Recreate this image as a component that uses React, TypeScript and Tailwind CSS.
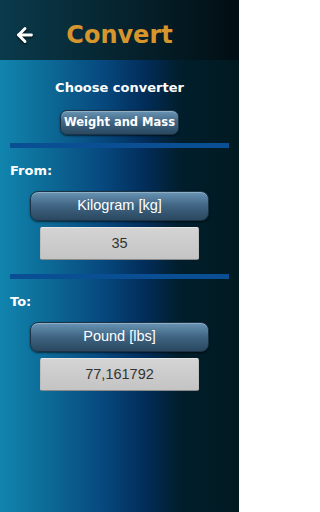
import { ArrowLeft } from 'lucide-react'

const body = { fontFamily: '"DejaVu Sans", Verdana, sans-serif' }
const plain = { fontFamily: '"Liberation Sans", Arial, sans-serif' }

function UnitButton({ label }: { label: string }) {
  return (
    <div
      className="mx-[30px] mt-[12px] h-[30px] rounded-[8px] border border-[#1c3346] bg-gradient-to-b from-[#6a95b5] via-[#3f6482] to-[#2a4860] shadow-[0_1px_2px_rgba(0,0,0,0.6),inset_0_1px_0_rgba(255,255,255,0.25)] flex items-center justify-center text-white text-[14.5px]"
      style={plain}
    >
      {label}
    </div>
  )
}

function ValueBox({ value }: { value: string }) {
  return (
    <div
      className="mx-[40px] mt-[6px] h-[33px] rounded-[2px] border border-t-[#e6e6e6] border-x-[#bdbdbd] border-b-[#8a8a8a] bg-gradient-to-b from-[#d4d4d4] to-[#c4c4c4] flex items-center justify-center text-[#333] text-[14.5px]"
      style={plain}
    >
      {value}
    </div>
  )
}

function Divider() {
  return <div className="mx-[10px] h-[5px] bg-[#0a4f94]" />
}

export default function App() {
  return (
    <div
      className="w-[239px] h-[512px] overflow-hidden bg-[linear-gradient(to_right,#1185ae_0%,#0c6794_22%,#074a80_42%,#022e5c_60%,#011e2c_75%,#001a20_100%)]"
      style={body}
    >
      {/* Header */}
      <div className="h-[60px] pt-[10px] flex items-center bg-[linear-gradient(to_right,#0a3a4b,#06242f_50%,#010e13)]">
        <div className="w-[36px] pl-[14px] flex items-center">
          <ArrowLeft className="w-[24px] h-[24px] text-white drop-shadow-[0_1px_1px_rgba(0,0,0,0.8)]" strokeWidth={3.2} />
        </div>
        <div className="flex-1 text-center text-[24px] leading-[28px] font-bold text-[#d6962d]">Convert</div>
        <div className="w-[36px]" />
      </div>

      <div className="pt-[20px] text-center text-[13px] leading-[16px] font-bold text-white">
        Choose converter
      </div>
      <div className="mt-[14px] flex justify-center">
        <div className="w-[119px] h-[25px] rounded-[7px] border border-[#1c3346] bg-gradient-to-b from-[#6a95b5] via-[#3f6482] to-[#2a4860] shadow-[0_1px_2px_rgba(0,0,0,0.6),inset_0_1px_0_rgba(255,255,255,0.25)] flex items-center justify-center text-white text-[11.5px] font-bold">
          Weight and Mass
        </div>
      </div>

      <div className="mt-[8px]">
        <Divider />
      </div>

      <div className="mt-[15px] pl-[10px] text-[13px] leading-[16px] font-bold text-white">From:</div>
      <UnitButton label="Kilogram [kg]" />
      <ValueBox value="35" />

      <div className="mt-[14px]">
        <Divider />
      </div>

      <div className="mt-[15px] pl-[10px] text-[13px] leading-[16px] font-bold text-white">To:</div>
      <div className="mt-[1px]" />
      <UnitButton label="Pound [lbs]" />
      <ValueBox value="77,161792" />
    </div>
  )
}
